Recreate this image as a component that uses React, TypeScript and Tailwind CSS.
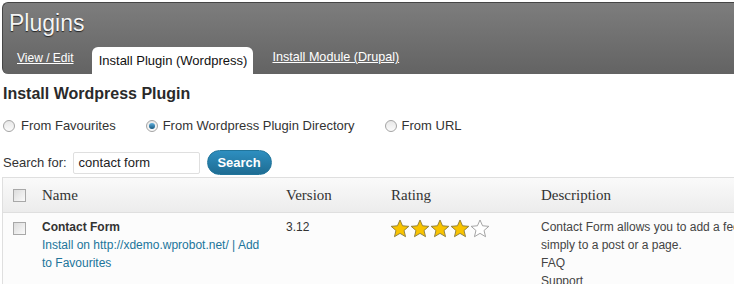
import React from 'react';

const font = { fontFamily: '"Liberation Sans", Arial, sans-serif' };

function Star({ filled }: { filled: boolean }) {
  return (
    <svg width="20" height="19" viewBox="0 0 24 23">
      <path
        d="M12 1.2l3.1 7 7.6.7-5.8 5 1.8 7.5L12 17.4l-6.7 4 1.8-7.5-5.8-5 7.6-.7z"
        fill={filled ? '#f8c300' : '#ffffff'}
        stroke={filled ? '#8a7a3a' : '#9a9a9a'}
        strokeWidth="1.1"
        strokeLinejoin="round"
      />
    </svg>
  );
}

function Radio({ checked }: { checked?: boolean }) {
  return (
    <span className="inline-flex h-[12px] w-[12px] items-center justify-center rounded-full border border-[#a4a4a4] bg-gradient-to-b from-[#e8e8e8] to-[#fbfbfb]">
      {checked && <span className="h-[6px] w-[6px] rounded-full bg-gradient-to-b from-[#5fb0dd] to-[#14567e]" />}
    </span>
  );
}

function Checkbox() {
  return <span className="inline-block h-[13px] w-[13px] border border-[#a8a8a8] bg-gradient-to-br from-[#dcdcdc] to-[#fafafa]" />;
}

export default function App() {
  return (
    <div className="h-[284px] w-[734px] overflow-hidden bg-white text-[#333]" style={font}>
      <div className="pl-[2px] pt-[2px]">
        <div className="flex h-[72px] flex-col rounded-l-[6px] border border-r-0 border-b-0 border-[#454545] bg-gradient-to-b from-[#7d7d7d] to-[#636363]">
          <h1 className="pl-[6px] pt-[6px] text-[23px] leading-[28px] text-[#f4f4f4] [text-shadow:0_1px_1px_#222]">Plugins</h1>
          <div className="mt-auto flex items-end">
            <a className="ml-[14px] mr-[19px] pb-[7px] text-[12px] text-white underline">View / Edit</a>
            <div className="flex h-[27px] w-[161px] items-center justify-center rounded-t-[6px] bg-white pt-[1px] text-[13px] text-[#111]">
              Install Plugin (Wordpress)
            </div>
            <a className="ml-[19px] pb-[7px] text-[12.6px] text-white underline">Install Module (Drupal)</a>
          </div>
        </div>
      </div>

      <div className="px-[3px]">
        <h2 className="mt-[10px] text-[16px] font-bold leading-[20px] text-[#2a2a2a]">Install Wordpress Plugin</h2>

        <div className="mt-[14px] flex items-center text-[13px] leading-[16px]">
          <label className="flex items-center gap-[6px]">
            <Radio /> From Favourites
          </label>
          <label className="ml-[30px] flex items-center gap-[5px]">
            <Radio checked /> From Wordpress Plugin Directory
          </label>
          <label className="ml-[30px] flex items-center gap-[5px]">
            <Radio /> From URL
          </label>
        </div>

        <div className="mt-[16px] flex items-center text-[13px]">
          <span>Search for:</span>
          <div className="ml-[6px] flex h-[22px] w-[127px] items-center rounded-[2px] border border-[#dfdfdf] pl-[5px] text-[#222]">
            contact form
          </div>
          <button className="ml-[7px] h-[25px] w-[65px] rounded-full border border-[#21759b] bg-gradient-to-b from-[#2e8fc0] to-[#1e6c93] text-[13px] font-bold text-white">
            Search
          </button>
        </div>
      </div>

      <div className="ml-[2px] mt-[2px] w-[900px] border-l border-t border-[#dfdfdf]">
        <div className="flex h-[35px] items-center border-b border-[#dfdfdf] bg-gradient-to-b from-[#fafafa] to-[#ececec] text-[15px] text-[#333]" style={{ fontFamily: '"Liberation Serif", Georgia, serif' }}>
          <div className="flex w-[31px] justify-center pl-[2px]">
            <Checkbox />
          </div>
          <div className="w-[244px] pl-[8px]">Name</div>
          <div className="w-[105px] pl-[8px]">Version</div>
          <div className="w-[150px] pl-[8px]">Rating</div>
          <div className="pl-[8px]">Description</div>
        </div>
        <div className="flex bg-[#fcfcfc] pt-[5px] text-[12px] leading-[18px]">
          <div className="flex w-[31px] justify-center pl-[2px] pt-[4px]">
            <Checkbox />
          </div>
          <div className="w-[244px] pl-[8px]">
            <div className="font-bold">Contact Form</div>
            <div className="w-[230px] text-[#21759b]">Install on http://xdemo.wprobot.net/ | Add to Favourites</div>
          </div>
          <div className="w-[105px] pl-[8px]">3.12</div>
          <div className="flex w-[150px] pl-[7px] pt-[1px]">
            <Star filled />
            <Star filled />
            <Star filled />
            <Star filled />
            <Star filled={false} />
          </div>
          <div className="pl-[8px] text-[#444]">
            <div className="whitespace-nowrap">Contact Form allows you to add a feedback form easily and</div>
            <div>simply to a post or a page.</div>
            <div>FAQ</div>
            <div>Support</div>
          </div>
        </div>
      </div>
    </div>
  );
}
